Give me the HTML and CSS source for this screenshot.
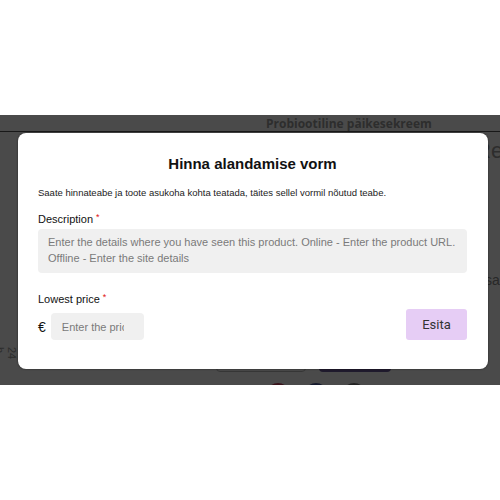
FILE: index.html
```html
<!DOCTYPE html>
<html lang="et">
<head>
    <meta charset="UTF-8">
    <meta name="viewport" content="width=device-width, initial-scale=1.0">
    <title>Hinna alandamise vorm</title>
    <link rel="stylesheet" href="styles.css">
</head>
<body>

    <div class="top-space"></div>

    <div class="stage">
        <!-- leht taustal -->
        <div class="page">
            <div class="page-head">Probiootiline päikesekreem</div>
            <div class="page-main">
                <div class="side-left">24 h</div>
                <div class="side-right">
                    <span class="side-big">Ref</span>
                    <span class="side-small">Lisada</span>
                </div>
            </div>
            <div class="page-actions">
                <span class="btn-ghost"></span>
                <span class="btn-dark"></span>
            </div>
            <div class="page-share">
                <span class="dot red"></span>
                <span class="dot blue"></span>
                <span class="dot grey"></span>
            </div>
        </div>

        <div class="overlay">
            <div class="modal">
                <h2 class="modal-title">Hinna alandamise vorm</h2>
                <p class="modal-text">Saate hinnateabe ja toote asukoha kohta teatada, täites sellel vormil nõutud teabe.</p>

                <label class="field-label" for="desc">Description <span class="req">*</span></label>
                <textarea id="desc" class="field-area" placeholder="Enter the details where you have seen this product. Online - Enter the product URL.&#10;Offline - Enter the site details"></textarea>

                <label class="field-label price-label" for="price">Lowest price <span class="req">*</span></label>
                <div class="price-row">
                    <div class="price-group">
                        <span class="euro">€</span>
                        <input id="price" class="price-input" type="text" placeholder="Enter the price">
                    </div>
                    <button class="submit">Esita</button>
                </div>
            </div>
        </div>
    </div>

</body>
</html>
```

FILE: styles.css
```css
body {
    margin: 0;
    background-color: #fff;
    font-family: "Liberation Sans", Arial, sans-serif;
}
.top-space {
    height: 115px;
}
.stage {
    position: relative;
    height: 270px;
    overflow: hidden;
}

/* taustaleht */
.page {
    height: 270px;
    display: flex;
    flex-direction: column;
    background-color: #fff;
}
.page > * {
    flex-shrink: 0;
}
.page-head {
    height: 16px;
    padding-left: 266px;
    border-bottom: 1px solid #555;
    font-family: "Open Sans", sans-serif;
    font-weight: 700;
    font-size: 12px;
    line-height: 18px;
    color: #9c9c9c;
}
.page-main {
    height: 210px;
    display: flex;
    justify-content: space-between;
}
.side-left {
    width: 18px;
    margin-top: 215px;
    writing-mode: vertical-rl;
    font-size: 11px;
    color: #999;
    background-color: #f4f4f4;
}
.side-right {
    width: 12px;
    display: flex;
    flex-direction: column;
    overflow: hidden;
    white-space: nowrap;
}
.side-big {
    margin-top: 6px;
    margin-left: -13px;
    font-size: 22px;
    color: #9a9a9a;
}
.side-small {
    margin-top: 108px;
    margin-left: -14px;
    font-size: 14px;
    color: #8a8a8a;
}
.page-actions {
    height: 30px;
    display: flex;
    gap: 13px;
    padding-left: 216px;
}
.btn-ghost {
    width: 88px;
    border: 1px solid #bbb;
    border-radius: 4px;
}
.btn-dark {
    width: 72px;
    background-color: #6b5a9a;
    border-radius: 4px;
}
.page-share {
    display: flex;
    gap: 14px;
    margin-top: 11px;
    padding-left: 266px;
}
.dot {
    width: 24px;
    height: 24px;
    border-radius: 50%;
}
.dot.red { background-color: #c0405a; }
.dot.blue { background-color: #4a5a9a; }
.dot.grey { background-color: #777; }

/* tume kate ja vorm */
.overlay {
    position: absolute;
    inset: 0;
    background-color: rgba(0, 0, 0, 0.71);
    display: flex;
    justify-content: flex-start;
    align-items: flex-start;
    padding: 18px 0 0 18px;
}
.modal {
    width: 470px;
    box-sizing: border-box;
    padding: 22px 21px 29px 20px;
    background-color: #fff;
    border-radius: 8px;
    box-shadow: 0 0 2px rgba(0, 0, 0, 0.6);
    display: flex;
    flex-direction: column;
}
.modal-title {
    margin: 0;
    text-align: center;
    font-size: 15px;
    line-height: 18px;
    font-weight: 700;
    color: #111;
}
.modal-text {
    margin: 14px 0 0;
    font-size: 9.5px;
    line-height: 12px;
    color: #222;
}
.field-label {
    margin-top: 13px;
    font-size: 11px;
    line-height: 14px;
    color: #111;
}
.req {
    color: #e01010;
    font-size: 9px;
    vertical-align: top;
    line-height: 10px;
}
.field-area {
    margin-top: 3px;
    height: 44px;
    box-sizing: border-box;
    padding: 5px 10px;
    border: none;
    border-radius: 4px;
    background-color: #f0f0f0;
    font-family: "Liberation Sans", Arial, sans-serif;
    font-size: 11px;
    line-height: 16px;
    resize: none;
    overflow: hidden;
    outline: none;
}
.field-area::placeholder,
.price-input::placeholder {
    color: #7a7a7a;
}
.price-label {
    margin-top: 19px;
}
.price-row {
    margin-top: 3px;
    display: flex;
    justify-content: space-between;
    align-items: flex-end;
}
.price-group {
    display: flex;
    align-items: center;
    gap: 5px;
}
.euro {
    font-size: 14px;
    line-height: 16px;
    color: #111;
}
.price-input {
    width: 93px;
    height: 27px;
    box-sizing: border-box;
    padding: 0 20px 0 11px;
    border: none;
    border-radius: 4px;
    background-color: #f0f0f0;
    font-family: "Liberation Sans", Arial, sans-serif;
    font-size: 11px;
    outline: none;
}
.submit {
    width: 61px;
    height: 31px;
    border: none;
    border-radius: 3px;
    background-color: #e6cdf5;
    font-family: Roboto, sans-serif;
    font-size: 13px;
    color: #333;
    cursor: pointer;
}
```
